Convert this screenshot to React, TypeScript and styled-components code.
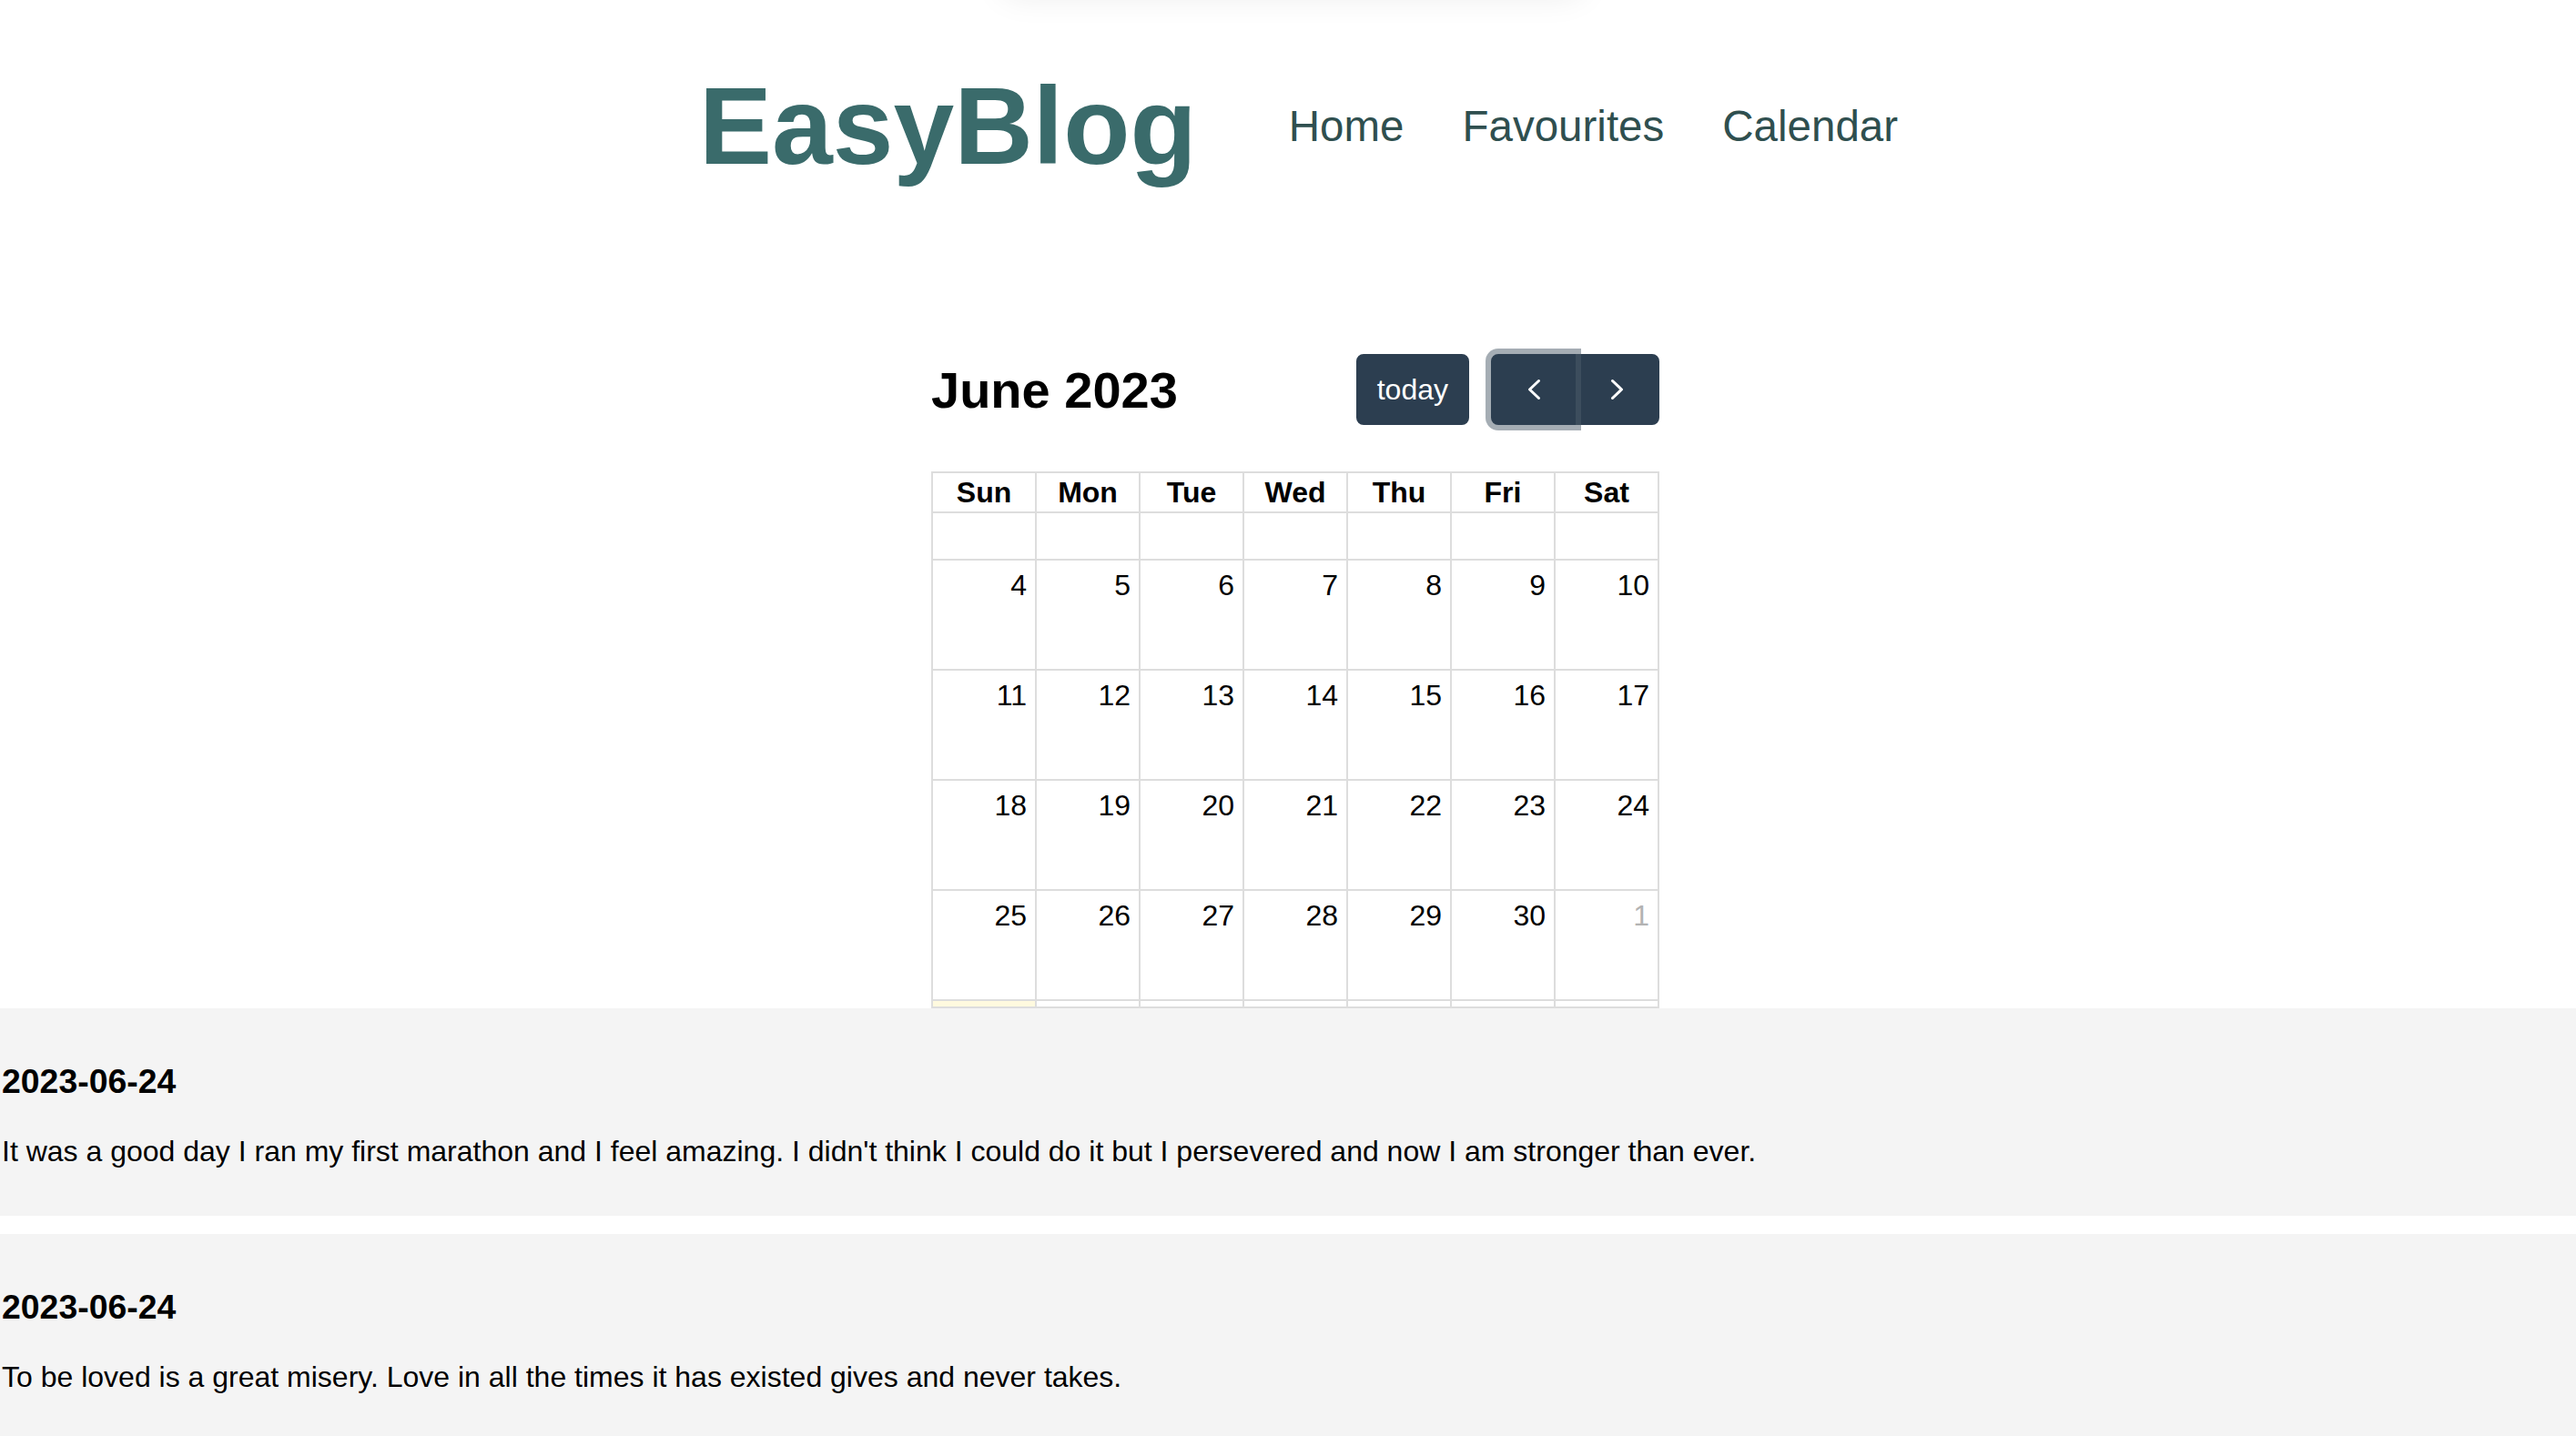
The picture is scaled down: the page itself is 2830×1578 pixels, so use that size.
import React from "react";
import styled, { createGlobalStyle } from "styled-components";

const NAV_ITEMS = ["Home", "Favourites", "Calendar"];
const WEEK_DAYS = ["Sun", "Mon", "Tue", "Wed", "Thu", "Fri", "Sat"];

type Day = { label: string; other?: boolean; today?: boolean };

const blankWeek = (todayIndex = -1): Day[] =>
  Array.from({ length: 7 }, (_, i) => ({ label: "", today: i === todayIndex }));

// first week row is rendered empty, the last one is cut off by the list
const WEEKS: Day[][] = [
  blankWeek(),
  [4, 5, 6, 7, 8, 9, 10].map((d) => ({ label: String(d) })),
  [11, 12, 13, 14, 15, 16, 17].map((d) => ({ label: String(d) })),
  [18, 19, 20, 21, 22, 23, 24].map((d) => ({ label: String(d) })),
  [
    ...[25, 26, 27, 28, 29, 30].map((d) => ({ label: String(d) })),
    { label: "1", other: true },
  ],
  blankWeek(0),
];

const POSTS = [
  {
    date: "2023-06-24",
    body: "It was a good day I ran my first marathon and I feel amazing. I didn't think I could do it but I persevered and now I am stronger than ever.",
  },
  {
    date: "2023-06-24",
    body: "To be loved is a great misery. Love in all the times it has existed gives and never takes.",
  },
];

const GlobalStyle = createGlobalStyle`
  body {
    margin: 0;
    background: #fff;
    color: #000;
    font-family: "Liberation Sans", Arial, Helvetica, sans-serif;
  }
`;

const Chevron = ({ dir }: { dir: "left" | "right" }) => (
  <svg width="20" height="26" viewBox="0 0 20 26" fill="none">
    <path
      d={dir === "left" ? "M15.5 3.5 L5.5 13 L15.5 22.5" : "M4.5 3.5 L14.5 13 L4.5 22.5"}
      stroke="#fff"
      strokeWidth="3"
      strokeLinecap="round"
      strokeLinejoin="round"
    />
  </svg>
);

const App = () => {
  return (
    <PageStyled>
      <GlobalStyle />
      <ToastStyled />
      <TopStyled>
        <HeaderStyled>
          <LogoStyled>EasyBlog</LogoStyled>
          <NavStyled>
            {NAV_ITEMS.map((item) => (
              <NavLinkStyled key={item} href="#">
                {item}
              </NavLinkStyled>
            ))}
          </NavStyled>
        </HeaderStyled>

        <CalendarStyled>
          <ToolbarStyled>
            <TitleStyled>June 2023</TitleStyled>
            <ButtonRowStyled>
              <ButtonStyled>today</ButtonStyled>
              <GroupStyled>
                <IconButtonStyled side="left" focused>
                  <Chevron dir="left" />
                </IconButtonStyled>
                <IconButtonStyled side="right">
                  <Chevron dir="right" />
                </IconButtonStyled>
              </GroupStyled>
            </ButtonRowStyled>
          </ToolbarStyled>

          <GridClipStyled>
            <GridStyled>
              {WEEK_DAYS.map((d) => (
                <HeadCellStyled key={d}>{d}</HeadCellStyled>
              ))}
              {WEEKS.map((week, w) =>
                week.map((day, i) => (
                  <DayCellStyled
                    key={`${w}-${i}`}
                    other={!!day.other}
                    today={!!day.today}
                  >
                    {day.label}
                  </DayCellStyled>
                ))
              )}
            </GridStyled>
          </GridClipStyled>
        </CalendarStyled>
      </TopStyled>

      <PostListStyled>
        {POSTS.map((post, i) => (
          <PostStyled key={i}>
            <PostDateStyled>{post.date}</PostDateStyled>
            <PostBodyStyled>{post.body}</PostBodyStyled>
          </PostStyled>
        ))}
      </PostListStyled>
    </PageStyled>
  );
};

const PageStyled = styled.div`
  position: relative;
  min-height: 1578px;
  overflow: hidden;
`;

// toast sitting just above the viewport, only its shadow shows
const ToastStyled = styled.div`
  position: absolute;
  top: -90px;
  left: 1100px;
  width: 640px;
  height: 80px;
  border-radius: 16px;
  background: #fff;
  box-shadow: 0 6px 36px rgba(0, 0, 0, 0.08);
`;

const TopStyled = styled.div`
  padding-left: 16px;
`;

const HeaderStyled = styled.header`
  display: flex;
  justify-content: center;
  align-items: center;
  gap: 101px;
  padding: 69px 0 0 7px;
`;

const LogoStyled = styled.h1`
  margin: 0;
  font-size: 120px;
  font-weight: 700;
  color: #3a6b6b;
`;

const NavStyled = styled.nav`
  display: flex;
  align-items: center;
  gap: 64px;
`;

const NavLinkStyled = styled.a`
  font-size: 47.5px;
  color: #2f4f4f;
  text-decoration: none;
`;

const CalendarStyled = styled.section`
  width: 800px;
  margin: 182px auto 0;
`;

const ToolbarStyled = styled.div`
  display: flex;
  justify-content: space-between;
  align-items: center;
  margin-bottom: 51px;
`;

const TitleStyled = styled.h2`
  margin: 0;
  font-size: 56px;
  font-weight: 700;
`;

const ButtonRowStyled = styled.div`
  display: flex;
  align-items: center;
  gap: 24px;
`;

const ButtonStyled = styled.button`
  height: 78px;
  padding: 0 21px;
  border: 2px solid #2c3e50;
  border-radius: 8px;
  background: #2c3e50;
  color: #fff;
  font-family: inherit;
  font-size: 32px;
  line-height: 48px;
`;

const GroupStyled = styled.div`
  display: flex;
`;

const IconButtonStyled = styled.button<{
  side: "left" | "right";
  focused?: boolean;
}>`
  position: relative;
  z-index: ${({ focused }) => (focused ? 1 : 0)};
  display: flex;
  align-items: center;
  justify-content: center;
  width: 93px;
  height: 78px;
  padding: 0;
  margin-left: ${({ side }) => (side === "right" ? "-1px" : "0")};
  border: 2px solid #2c3e50;
  background: #2c3e50;
  border-radius: ${({ side }) => (side === "left" ? "8px 0 0 8px" : "0 8px 8px 0")};
  box-shadow: ${({ focused }) =>
    focused ? "0 0 0 6px rgba(76, 91, 106, 0.5)" : "none"};
`;

const GridClipStyled = styled.div`
  height: 588px;
  overflow: hidden;
  border-bottom: 2px solid #ddd;
`;

const GridStyled = styled.div`
  display: grid;
  grid-template-columns: repeat(7, 1fr);
  grid-template-rows: 44px 52px repeat(5, 121px);
  border-top: 2px solid #ddd;
  border-left: 2px solid #ddd;
`;

const HeadCellStyled = styled.div`
  display: flex;
  align-items: center;
  justify-content: center;
  border-right: 2px solid #ddd;
  border-bottom: 2px solid #ddd;
  font-size: 32px;
  font-weight: 700;
`;

const DayCellStyled = styled.div<{ other: boolean; today: boolean }>`
  padding: 9px 9px 0 0;
  border-right: 2px solid #ddd;
  border-bottom: 2px solid #ddd;
  text-align: right;
  font-size: 32px;
  color: ${({ other }) => (other ? "#b3b3b3" : "#000")};
  background: ${({ today }) => (today ? "rgba(255, 220, 40, 0.15)" : "transparent")};
`;

const PostListStyled = styled.div`
  display: flex;
  flex-direction: column;
  gap: 20px;
`;

const PostStyled = styled.article`
  padding: 21px 2px 20px;
  background: #f4f4f4;
`;

const PostDateStyled = styled.h3`
  margin: 38px 0 37px;
  font-size: 37.4px;
  font-weight: 700;
`;

const PostBodyStyled = styled.p`
  margin: 33px 0 32px;
  font-size: 32px;
`;

export default App;
